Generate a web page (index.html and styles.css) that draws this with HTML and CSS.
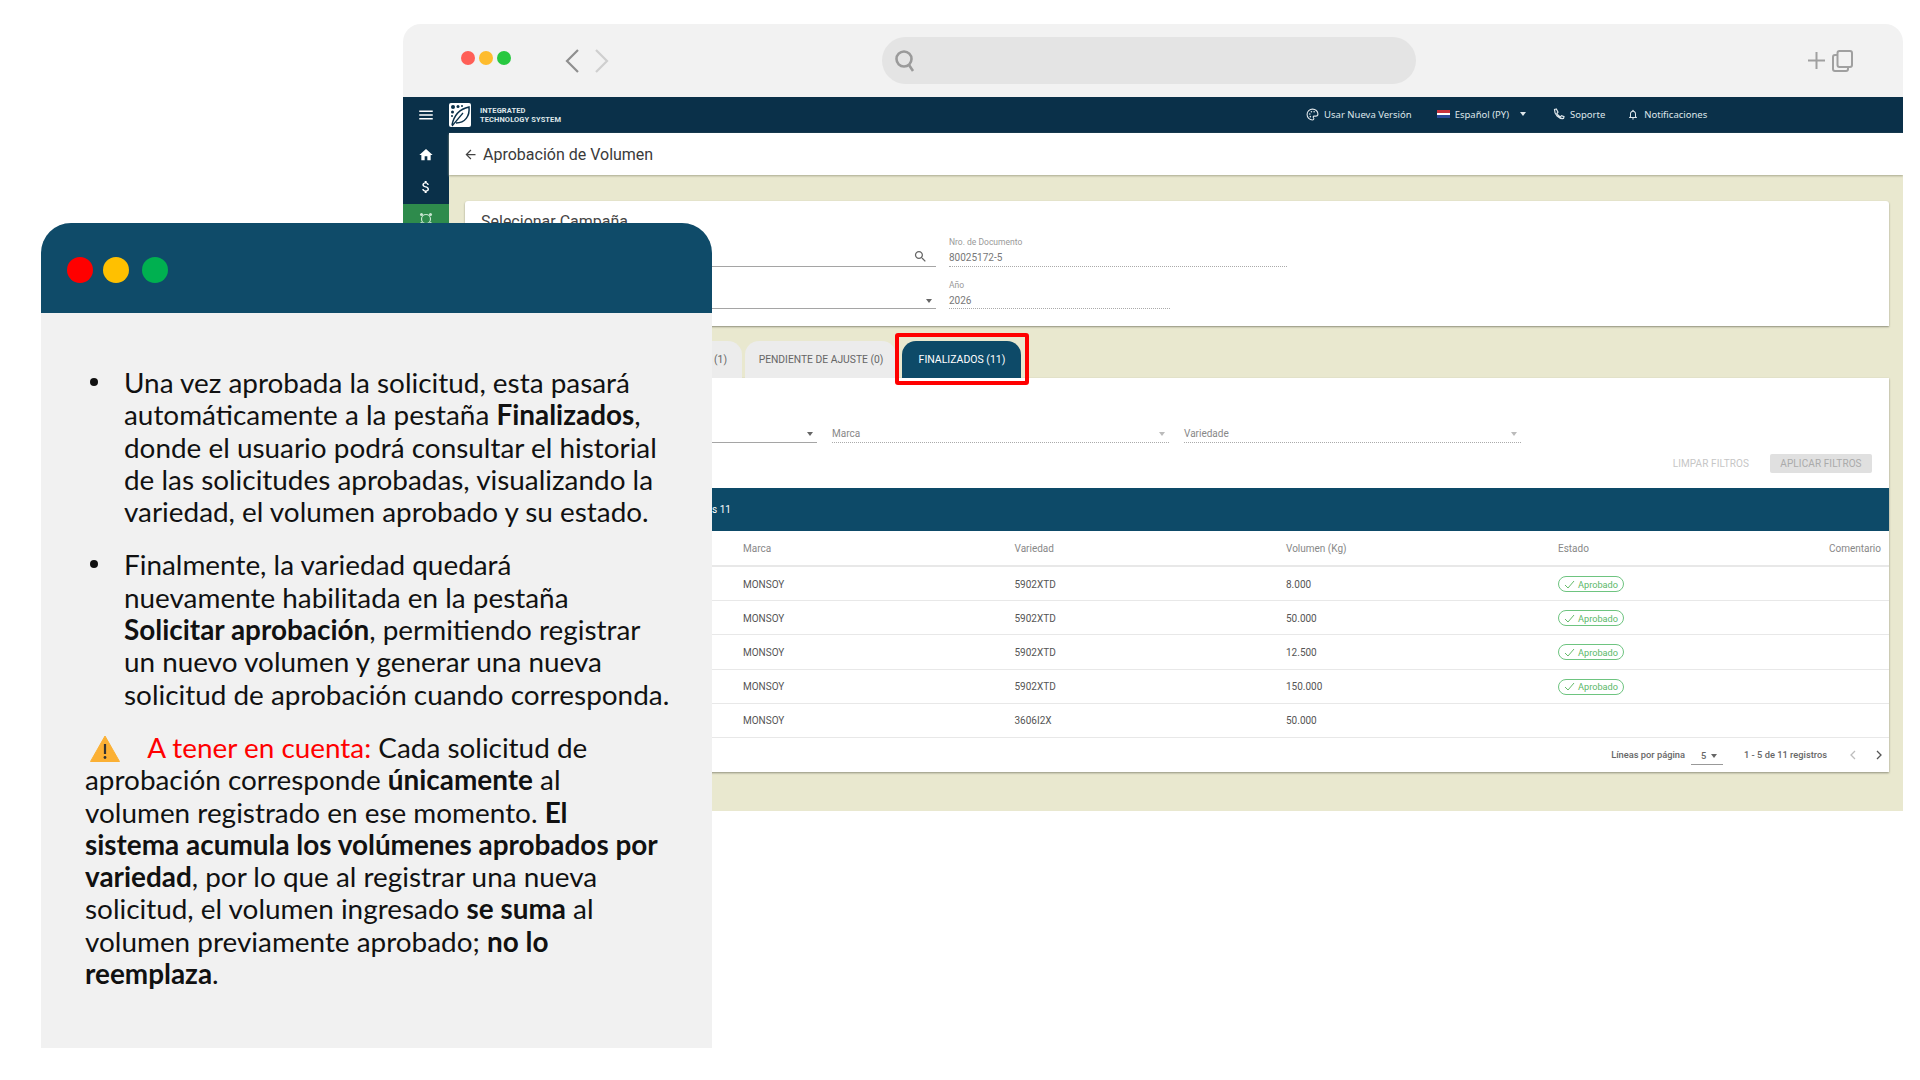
FILE: index.html
```html
<!DOCTYPE html>
<html lang="es">

<head>
  <meta charset="UTF-8">
  <meta name="viewport" content="width=device-width,initial-scale=1.0">
  <title>Aprobación de Volumen</title>
  <link rel="stylesheet" href="styles.css">
</head>

<body>
  <div class="browser">
    <div class="browser-bar">
      <div class="mac-dots">
        <span class="mac-dot red"></span>
        <span class="mac-dot amber"></span>
        <span class="mac-dot green"></span>
      </div>
      <div class="nav-arrows">
        <svg width="16" height="26" viewBox="0 0 16 26"><path d="M14 2 3 13l11 11" fill="none" stroke="#8f8f8f" stroke-width="2.2"/></svg>
        <svg width="16" height="26" viewBox="0 0 16 26"><path d="M2 2l11 11L2 24" fill="none" stroke="#cfcfcf" stroke-width="2.2"/></svg>
      </div>
      <div class="url-bar">
        <svg width="22" height="23" viewBox="0 0 22 23"><circle cx="10" cy="10" r="7.5" fill="none" stroke="#9a9a9a" stroke-width="2.6"/><path d="M15 16l4 6" stroke="#9a9a9a" stroke-width="2.6"/></svg>
      </div>
      <div class="bar-tools">
        <svg width="17" height="17" viewBox="0 0 17 17"><path d="M8.5 0v17M0 8.5h17" stroke="#a0a0a0" stroke-width="2"/></svg>
        <svg width="21" height="22" viewBox="0 0 21 22"><rect x="5.5" y="1" width="14.500" height="16" rx="2" fill="none" stroke="#a0a0a0" stroke-width="2"/><path d="M5.500 5H3a2 2 0 0 0-2 2v12a2 2 0 0 0 2 2h11a2 2 0 0 0 2-2v-2" fill="none" stroke="#a0a0a0" stroke-width="2"/></svg>
      </div>
    </div>

    <header class="appbar">
      <svg class="menu-icon" width="18" height="18" viewBox="0 0 24 24"><path d="M3 18h18v-2H3v2zm0-5h18v-2H3v2zm0-7v2h18V6H3z" fill="#fff"/></svg>
      <svg class="logo" width="22" height="24" viewBox="0 0 22 24">
        <rect width="22" height="24" rx="2" fill="#fff"/>
        <path d="M3 22C5 12 11 6 20 4c1 9-4 16-13 16" fill="none" stroke="#0a3049" stroke-width="1.500"/>
        <path d="M3 23 14 10" stroke="#0a3049" stroke-width="1.200"/>
        <circle cx="4" cy="4" r="2" fill="#0a3049"/><circle cx="9" cy="3.500" r="1.500" fill="#0a3049"/><circle cx="3.500" cy="9" r="1.500" fill="#0a3049"/><circle cx="13" cy="3" r="1" fill="#0a3049"/><circle cx="3" cy="13" r="1" fill="#0a3049"/>
      </svg>
      <div class="brand">INTEGRATED<br>TECHNOLOGY SYSTEM</div>
      <nav class="top-links">
        <span class="top-link new-version">
          <svg width="13" height="13" viewBox="0 0 24 24"><path d="M12 2a10 10 0 0 0 0 20c1.500 0 2.500-1 2.500-2.300 0-1.500-1.300-1.800-1.300-3 0-1 .8-1.700 2-1.700H18a4 4 0 0 0 4-4C22 6 17.500 2 12 2z" fill="none" stroke="#dfe6ea" stroke-width="2"/><circle cx="7" cy="11" r="1.500" fill="#dfe6ea"/><circle cx="10" cy="7" r="1.500" fill="#dfe6ea"/><circle cx="15" cy="7" r="1.500" fill="#dfe6ea"/><circle cx="8" cy="16" r="1.500" fill="#dfe6ea"/></svg>
          Usar Nueva Versión
        </span>
        <span class="top-link lang">
          <span class="flag"></span>
          Español (PY)
          <i class="caret light"></i>
        </span>
        <span class="top-link support">
          <svg width="12" height="12" viewBox="0 0 24 24"><path d="M6.600 2 3 3c-.5 9.500 8.500 19 18 18l1-3.600-5-2-2.300 2.300c-3-1.500-5.500-4-7-7L10 8.400z" fill="none" stroke="#dfe6ea" stroke-width="2.400"/></svg>
          Soporte
        </span>
        <span class="top-link alerts">
          <svg width="12" height="13" viewBox="0 0 24 24"><path d="M12 22c1.100 0 2-.9 2-2h-4c0 1.100.9 2 2 2zm6-6v-5c0-3.070-1.630-5.640-4.500-6.320V4c0-.83-.67-1.500-1.500-1.500s-1.500.67-1.500 1.500v.68C7.640 5.360 6 7.920 6 11v5l-2 2v1h16v-1l-2-2zm-2 1H8v-6c0-2.480 1.510-4.500 4-4.500s4 2.020 4 4.500v6z" fill="#dfe6ea"/></svg>
          Notificaciones
        </span>
      </nav>
    </header>

    <div class="app-body">
      <aside class="sidebar">
        <div class="side-item">
          <svg width="16" height="16" viewBox="0 0 24 24"><path d="M10 20v-6h4v6h5v-8h3L12 3 2 12h3v8z" fill="#fff"/></svg>
        </div>
        <div class="side-item">
          <svg width="16" height="18" viewBox="0 0 24 24"><path d="M11.800 10.900c-2.270-.59-3-1.200-3-2.150 0-1.090 1.010-1.850 2.700-1.850 1.780 0 2.440.85 2.500 2.100h2.210c-.07-1.720-1.120-3.300-3.210-3.810V3h-3v2.160c-1.940.42-3.500 1.680-3.500 3.610 0 2.310 1.910 3.460 4.700 4.130 2.500.6 3 1.480 3 2.410 0 .69-.49 1.790-2.700 1.790-2.060 0-2.870-.92-2.980-2.100h-2.200c.12 2.190 1.760 3.420 3.680 3.830V21h3v-2.150c1.950-.37 3.500-1.500 3.500-3.550 0-2.840-2.430-3.810-4.700-4.400z" fill="#fff"/></svg>
        </div>
        <div class="side-item active">
          <svg width="14" height="14" viewBox="0 0 14 14"><circle cx="7" cy="7" r="4.500" fill="none" stroke="#c9e6d2" stroke-width="1.200"/><circle cx="2.500" cy="2.500" r="1.500" fill="#c9e6d2"/><circle cx="11.500" cy="2.500" r="1.500" fill="#c9e6d2"/><circle cx="2.500" cy="11.500" r="1.500" fill="#c9e6d2"/><circle cx="11.500" cy="11.500" r="1.500" fill="#c9e6d2"/></svg>
        </div>
      </aside>

      <main class="content">
        <div class="title-bar">
          <svg width="15" height="15" viewBox="0 0 24 24"><path d="M20 11H7.830l5.590-5.590L12 4l-8 8 8 8 1.410-1.410L7.830 13H20v-2z" fill="#444"/></svg>
          <h1>Aprobación de Volumen</h1>
        </div>

        <div class="page">
          <section class="card campaign">
            <h2>Selecionar Campaña</h2>
            <div class="field-row first">
              <div class="field solid">
                <svg class="field-icon" width="15" height="15" viewBox="0 0 24 24"><path d="M15.500 14h-.79l-.28-.27C15.410 12.590 16 11.110 16 9.500 16 5.910 13.090 3 9.500 3S3 5.910 3 9.500 5.910 16 9.500 16c1.610 0 3.090-.59 4.230-1.570l.27.28v.79l5 4.990L20.490 19l-4.990-5zm-6 0C7.010 14 5 11.990 5 9.500S7.010 5 9.500 5 14 7.010 14 9.500 11.990 14 9.500 14z" fill="#666"/></svg>
              </div>
              <div class="field dotted doc">
                <label>Nro. de Documento</label>
                <span>80025172-5</span>
              </div>
            </div>
            <div class="field-row">
              <div class="field solid">
                <i class="caret field-icon"></i>
              </div>
              <div class="field dotted year">
                <label>Año</label>
                <span>2026</span>
              </div>
            </div>
          </section>

          <div class="tabs">
            <div class="tab first-tab">(1)</div>
            <div class="tab">PENDIENTE DE AJUSTE (0)</div>
            <div class="tab active">FINALIZADOS (11)<span class="highlight"></span></div>
          </div>

          <section class="card results">
            <div class="filters">
              <div class="filter solid"><i class="caret"></i></div>
              <div class="filter dotted">Marca<i class="caret pale"></i></div>
              <div class="filter dotted">Variedade<i class="caret pale"></i></div>
            </div>
            <div class="filter-actions">
              <span class="clear-btn">LIMPAR FILTROS</span>
              <span class="apply-btn">APLICAR FILTROS</span>
            </div>
            <div class="band">s 11</div>

            <div class="row head">
              <span></span><span>Marca</span><span>Variedad</span><span>Volumen (Kg)</span><span>Estado</span><span class="right">Comentario</span>
            </div>
            <div class="row">
              <span></span><span>MONSOY</span><span>5902XTD</span><span>8.000</span>
              <span><b class="chip"><svg width="11" height="9" viewBox="0 0 11 9"><path d="M1 5l3 3 6-7" fill="none" stroke="#66bb6a"/></svg>Aprobado</b></span><span></span>
            </div>
            <div class="row">
              <span></span><span>MONSOY</span><span>5902XTD</span><span>50.000</span>
              <span><b class="chip"><svg width="11" height="9" viewBox="0 0 11 9"><path d="M1 5l3 3 6-7" fill="none" stroke="#66bb6a"/></svg>Aprobado</b></span><span></span>
            </div>
            <div class="row">
              <span></span><span>MONSOY</span><span>5902XTD</span><span>12.500</span>
              <span><b class="chip"><svg width="11" height="9" viewBox="0 0 11 9"><path d="M1 5l3 3 6-7" fill="none" stroke="#66bb6a"/></svg>Aprobado</b></span><span></span>
            </div>
            <div class="row">
              <span></span><span>MONSOY</span><span>5902XTD</span><span>150.000</span>
              <span><b class="chip"><svg width="11" height="9" viewBox="0 0 11 9"><path d="M1 5l3 3 6-7" fill="none" stroke="#66bb6a"/></svg>Aprobado</b></span><span></span>
            </div>
            <div class="row">
              <span></span><span>MONSOY</span><span>3606I2X</span><span>50.000</span><span></span><span></span>
            </div>

            <div class="pager">
              <span>Líneas por página</span>
              <span class="page-size">5<i class="caret"></i></span>
              <span class="range">1 - 5 de 11 registros</span>
              <svg width="7" height="10" viewBox="0 0 7 10"><path d="M6 1 2 5l4 4" fill="none" stroke="#bdbdbd" stroke-width="1.300"/></svg>
              <svg class="next" width="7" height="10" viewBox="0 0 7 10"><path d="M1 1l4 4-4 4" fill="none" stroke="#555" stroke-width="1.300"/></svg>
            </div>
          </section>
        </div>
      </main>
    </div>
  </div>

  <div class="note">
    <div class="note-head">
      <span class="note-dot red"></span>
      <span class="note-dot amber"></span>
      <span class="note-dot green"></span>
    </div>
    <div class="note-body">
      <ul>
        <li>Una vez aprobada la solicitud, esta pasará<br>automáticamente a la pestaña <b>Finalizados</b>,<br>donde el usuario podrá consultar el historial<br>de las solicitudes aprobadas, visualizando la<br>variedad, el volumen aprobado y su estado.</li>
        <li>Finalmente, la variedad quedará<br>nuevamente habilitada en la pestaña<br><b>Solicitar aprobación</b>, permitiendo registrar<br>un nuevo volumen y generar una nueva<br>solicitud de aprobación cuando corresponda.</li>
      </ul>
      <p class="warning">
        <svg width="30" height="27" viewBox="0 0 30 27"><path d="M15 1 29.500 26.500H.5z" fill="#fbb034" stroke="#fbb034" stroke-linejoin="round"/><path d="M15 9v10" stroke="#333" stroke-width="2.200"/><circle cx="15" cy="22.500" r="1.400" fill="#333"/></svg>
        <span class="warning-label">A tener en cuenta:</span> Cada solicitud de<br>aprobación corresponde <b>únicamente</b> al<br>volumen registrado en ese momento. <b>El</b><br><b>sistema acumula los volúmenes aprobados por</b><br><b>variedad</b>, por lo que al registrar una nueva<br>solicitud, el volumen ingresado <b>se suma</b> al<br>volumen previamente aprobado; <b>no lo</b><br><b>reemplaza</b>.
      </p>
    </div>
  </div>
</body>

</html>
```

FILE: styles.css
```css
* {
  box-sizing: border-box;
}
html, body {
  margin: 0;
  height: 100%;
}
body {
  position: relative;
  width: 1920px;
  height: 1080px;
  overflow: hidden;
  background: #fff;
  font-family: Roboto, "Liberation Sans", sans-serif;
}

/* browser window behind the note */
.browser {
  position: absolute;
  left: 403px;
  top: 24px;
  width: 1500px;
  height: 787px;
  display: flex;
  flex-direction: column;
  border-radius: 18px 18px 0 0;
  overflow: hidden;
}
.browser-bar {
  height: 73px;
  flex: none;
  display: flex;
  align-items: center;
  background: #f2f2f2;
  padding-left: 57px;
}
.mac-dots {
  display: flex;
  gap: 4px;
  margin: 0 0 5px 1px;
}
.mac-dot {
  width: 14px;
  height: 14px;
  border-radius: 50%;
}
.mac-dot.red { background: #ff5f57; }
.mac-dot.amber { background: #febc2e; }
.mac-dot.green { background: #28c840; }
.nav-arrows {
  display: flex;
  gap: 14px;
  margin-left: 53px;
}
.url-bar {
  width: 534px;
  height: 47px;
  margin-left: 272px;
  padding-left: 12px;
  display: flex;
  align-items: center;
  background: #e4e4e4;
  border-radius: 24px;
}
.bar-tools {
  display: flex;
  align-items: center;
  gap: 7px;
  margin-left: 392px;
}

.appbar {
  height: 36px;
  flex: none;
  display: flex;
  align-items: center;
  background: #0a3049;
  color: #dfe6ea;
}
.menu-icon {
  margin-left: 14px;
}
.logo {
  margin-left: 14px;
}
.brand {
  margin-left: 9px;
  font-size: 7.5px;
  line-height: 9px;
  font-weight: 700;
  letter-spacing: .1px;
}
.top-links {
  display: flex;
  align-items: center;
  margin: 0 0 2px 745px;
  font-family: "Noto Sans", sans-serif;
  font-size: 9.500px;
  gap: 21px;
}
.top-link {
  display: flex;
  align-items: center;
  gap: 5px;
  white-space: nowrap;
}
.lang {
  margin-left: 4px;
}
.support {
  margin-left: 6px;
}
.alerts {
  margin-left: 1px;
}
.flag {
  width: 13px;
  height: 8px;
  background: linear-gradient(#c8323c 33%, #fff 33% 66%, #2a4a9a 66%);
}

.caret {
  display: inline-block;
  width: 0;
  height: 0;
  border-left: 3.500px solid transparent;
  border-right: 3.500px solid transparent;
  border-top: 4px solid #666;
}
.caret.light { border-top-color: #dfe6ea; margin-left: 6px; }
.caret.pale { border-top-color: #bbb; }

.app-body {
  flex: 1;
  display: flex;
  min-height: 0;
}
.sidebar {
  width: 46px;
  flex: none;
  padding-top: 6px;
  background: #0a3049;
}
.side-item {
  height: 32px;
  display: flex;
  align-items: center;
  justify-content: center;
}
.side-item.active {
  height: 30px;
  margin-top: 1px;
  background: #2e8b4c;
}

.content {
  flex: 1;
  display: flex;
  flex-direction: column;
  min-width: 0;
}
.title-bar {
  height: 42px;
  flex: none;
  display: flex;
  align-items: center;
  gap: 5px;
  padding-left: 14px;
  background: #fff;
  box-shadow: 0 1px 2px #a9a98f;
  position: relative;
}
.title-bar h1 {
  margin: 0;
  font-size: 16px;
  font-weight: 400;
  color: #3a3a3a;
}
.page {
  flex: 1;
  padding: 26px 14px 0 16px;
  background: #e9e8cf;
}
.card {
  background: #fff;
  box-shadow: 0 1px 2px #8f8f7c;
}
.campaign {
  height: 125px;
  padding: 13px 0 0 16px;
  border-radius: 3px 3px 0 0;
}
.campaign h2 {
  margin: 0;
  font-size: 16px;
  line-height: 16px;
  font-weight: 400;
  color: #444;
}
.field-row {
  display: flex;
  gap: 13px;
  margin-top: 11px;
}
.field-row.first {
  margin-top: 6px;
}
.field {
  height: 31px;
  position: relative;
  padding-top: 1px;
  font-size: 10px;
  color: #777;
}
.field.solid {
  width: 455px;
  border-bottom: 1px solid #a5a5a5;
}
.field.dotted {
  border-bottom: 1px dotted #aaa;
}
.field.doc { width: 338px; }
.field.year { width: 221px; padding-top: 2px; }
.field label {
  display: block;
  font-size: 8.500px;
  line-height: 10px;
  color: #999;
}
.field span {
  display: block;
  margin-top: 5px;
  line-height: 12px;
}
.field-icon {
  position: absolute;
  right: 8px;
  bottom: 2px;
}
.caret.field-icon {
  right: 4px;
  bottom: 5px;
}

.tabs {
  display: flex;
  height: 37px;
  margin-top: 15px;
  padding-left: 155px;
}
.tab {
  display: flex;
  align-items: center;
  justify-content: center;
  width: 151px;
  margin-left: 3px;
  padding-left: 1px;
  background: #ececec;
  border-radius: 14px 14px 0 0;
  font-size: 10.300px;
  color: #666;
  white-space: nowrap;
}
.first-tab {
  width: 122px;
  margin-left: 0;
  justify-content: flex-end;
  padding-right: 15px;
}
.tab.active {
  position: relative;
  width: 119px;
  margin-left: 6px;
  background: #0d4a68;
  color: #fff;
  font-size: 10.500px;
}
.highlight {
  position: absolute;
  top: -8px;
  left: -7px;
  right: -8px;
  bottom: -7px;
  border: 4px solid #f00;
  border-radius: 3px;
}

.results {
  height: 394px;
  display: flex;
  flex-direction: column;
}
.filters {
  display: grid;
  grid-template-columns: 336px 337px 337px;
  gap: 15px;
  margin-top: 47px;
  padding-left: 16px;
}
.filter {
  height: 18px;
  display: flex;
  align-items: center;
  justify-content: space-between;
  padding-right: 4px;
  font-size: 10px;
  color: #888;
}
.filter.solid { border-bottom: 1px solid #a5a5a5; justify-content: flex-end; }
.filter.dotted { border-bottom: 1px dotted #aaa; }
.filter-actions {
  display: flex;
  justify-content: flex-end;
  align-items: center;
  gap: 21px;
  height: 19px;
  margin-top: 11px;
  padding-right: 17px;
  font-size: 10px;
  letter-spacing: .1px;
}
.clear-btn { color: #c6c6c6; }
.apply-btn {
  width: 102px;
  height: 19px;
  line-height: 19px;
  text-align: center;
  background: #e0e0e0;
  border-radius: 2px;
  color: #aaa;
}
.band {
  height: 43px;
  flex: none;
  margin-top: 15px;
  padding: 12px 0 0 247px;
  background: #0d4a68;
  color: #fff;
  font-size: 10px;
  line-height: 20px;
}
.row {
  display: grid;
  grid-template-columns: 278px 271.500px 271.500px 272px 1fr 1fr;
  align-items: center;
  height: 34.200px;
  padding: 1px 8px 0 0;
  border-bottom: 1px solid #e8e8e8;
  font-size: 10px;
  color: #555;
}
.row.head {
  height: 36px;
  padding-top: 0;
  color: #888;
  border-bottom-width: 2px;
}
.right {
  text-align: right;
}
.chip {
  display: inline-flex;
  align-items: center;
  gap: 3px;
  width: 66px;
  height: 16px;
  padding-left: 5px;
  border: 1px solid #6ec480;
  border-radius: 8px;
  font-size: 9.200px;
  font-weight: 400;
  color: #5cb86a;
}
.pager {
  flex: 1;
  display: flex;
  align-items: center;
  justify-content: flex-end;
  padding-right: 6px;
  font-size: 9.300px;
  font-weight: 500;
  color: #666;
}
.page-size {
  width: 32px;
  height: 20px;
  margin-left: 6px;
  padding: 3px 0 0 10px;
  display: flex;
  align-items: center;
  gap: 5px;
  border-bottom: 1px solid #999;
  align-self: center;
}
.range {
  margin: 0 22px 0 21px;
}
.next {
  margin-left: 20px;
}

/* note window over the browser */
.note {
  position: absolute;
  left: 41px;
  top: 223px;
  width: 671px;
  height: 825px;
  display: flex;
  flex-direction: column;
  border-radius: 30px 30px 0 0;
  overflow: hidden;
  background: #f1f1f1;
  font-family: Lato, "Noto Sans", sans-serif;
  font-size: 27.900px;
  line-height: 32.300px;
  color: #111;
}
.note-head {
  height: 90px;
  flex: none;
  display: flex;
  align-items: center;
  padding: 4px 0 0 25.500px;
  gap: 10px;
  background: #0f4b69;
}
.note-dot {
  width: 26px;
  height: 26px;
  border-radius: 50%;
}
.note-dot.red { background: #f00; }
.note-dot.amber { background: #ffc000; }
.note-dot.green { background: #00b050; margin-left: 3px; }
.note-body {
  padding: 53px 0 0 44px;
}
.note ul {
  margin: 0;
  padding: 0 0 0 39px;
  list-style: none;
}
.note li {
  position: relative;
  margin-bottom: 21px;
  white-space: nowrap;
}
.note li::before {
  content: "";
  position: absolute;
  left: -34px;
  top: 12px;
  width: 8px;
  height: 8px;
  border-radius: 50%;
  background: #111;
}
.warning {
  margin: 0;
  white-space: nowrap;
}
.warning svg {
  margin: 0 21px -4px 5px;
}
.warning-label {
  color: #f00;
}
```
